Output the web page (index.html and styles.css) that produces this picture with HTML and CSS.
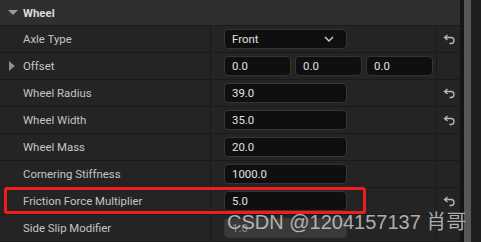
FILE: index.html
```html
<!DOCTYPE html>
<html lang="en">
<head>
    <meta charset="UTF-8">
    <title>Wheel</title>
    <link rel="stylesheet" href="styles.css">
</head>
<body>
    <div class="panel">
        <div class="details">
            <div class="category">
                <span class="tri-down"></span>
                <span class="category-name">Wheel</span>
            </div>

            <div class="row">
                <div class="name">Axle Type</div>
                <div class="value">
                    <div class="field combo">Front
                        <svg class="chevron" width="10" height="6" viewBox="0 0 10 6"><path d="M1 1 L5 5 L9 1" fill="none" stroke="#d0d0d0" stroke-width="1.4"/></svg>
                    </div>
                </div>
                <div class="reset"><svg width="12" height="11" viewBox="0 0 12 11"><path d="M4.5 1 L1.5 3.5 L4.5 6 M1.8 3.5 H8 A3 3 0 0 1 8 9.5 H6.5" fill="none" stroke="#b8b8b8" stroke-width="1.3"/></svg></div>
            </div>

            <div class="row">
                <div class="name"><span class="tri-right"></span>Offset</div>
                <div class="value triple">
                    <div class="field small">0.0</div>
                    <div class="field small">0.0</div>
                    <div class="field small">0.0</div>
                </div>
                <div class="reset"></div>
            </div>

            <div class="row">
                <div class="name">Wheel Radius</div>
                <div class="value"><div class="field">39.0</div></div>
                <div class="reset"><svg width="12" height="11" viewBox="0 0 12 11"><path d="M4.5 1 L1.5 3.5 L4.5 6 M1.8 3.5 H8 A3 3 0 0 1 8 9.5 H6.5" fill="none" stroke="#b8b8b8" stroke-width="1.3"/></svg></div>
            </div>

            <div class="row">
                <div class="name">Wheel Width</div>
                <div class="value"><div class="field">35.0</div></div>
                <div class="reset"><svg width="12" height="11" viewBox="0 0 12 11"><path d="M4.5 1 L1.5 3.5 L4.5 6 M1.8 3.5 H8 A3 3 0 0 1 8 9.5 H6.5" fill="none" stroke="#b8b8b8" stroke-width="1.3"/></svg></div>
            </div>

            <div class="row">
                <div class="name">Wheel Mass</div>
                <div class="value"><div class="field">20.0</div></div>
                <div class="reset"></div>
            </div>

            <div class="row">
                <div class="name">Cornering Stiffness</div>
                <div class="value"><div class="field">1000.0</div></div>
                <div class="reset"></div>
            </div>

            <div class="row">
                <div class="name">Friction Force Multiplier</div>
                <div class="value"><div class="field">5.0</div></div>
                <div class="reset"><svg width="12" height="11" viewBox="0 0 12 11"><path d="M4.5 1 L1.5 3.5 L4.5 6 M1.8 3.5 H8 A3 3 0 0 1 8 9.5 H6.5" fill="none" stroke="#b8b8b8" stroke-width="1.3"/></svg></div>
            </div>

            <div class="row">
                <div class="name">Side Slip Modifier</div>
                <div class="value"><div class="field hovered">1.0</div></div>
                <div class="reset"></div>
            </div>

            <!-- annotation drawn over the screenshot -->
            <div class="highlight"></div>
            <div class="watermark">CSDN @1204157137 肖哥</div>
        </div>
        <div class="scrollbar">
            <div class="thumb"></div>
        </div>
    </div>
</body>
</html>
```

FILE: styles.css
```css
body {
    margin: 0;
    padding: 0;
    background-color: #1a1a1a;
    font-family: Roboto, "Noto Sans", "Noto Sans CJK SC", sans-serif;
    font-size: 11.4px;
    color: #c4c4c4;
}

.panel {
    display: flex;
    width: 481px;
    height: 242px;
    overflow: hidden;
}

.details {
    position: relative;
    width: 461px;
    background-color: #242424;
}

.category {
    display: flex;
    align-items: center;
    height: 25px;
    border-bottom: 1px solid #1a1a1a;
    background-color: #2f2f2f;
    padding-left: 8px;
}

.tri-down {
    width: 0;
    height: 0;
    border-left: 5px solid transparent;
    border-right: 5px solid transparent;
    border-top: 5px solid #9a9a9a;
    margin-right: 5px;
}

.category-name {
    font-weight: bold;
    color: #dcdcdc;
}

.row {
    display: grid;
    grid-template-columns: 211px 226px 23px;
    height: 26px;
    border-bottom: 1px solid #1a1a1a;
}

.name {
    display: flex;
    align-items: center;
    padding-left: 23px;
    border-right: 1px solid #1a1a1a;
    position: relative;
}

.tri-right {
    position: absolute;
    left: 9px;
    top: 8px;
    width: 0;
    height: 0;
    border-top: 5px solid transparent;
    border-bottom: 5px solid transparent;
    border-left: 6px solid #8e8e8e;
}

.value {
    display: flex;
    align-items: center;
    padding-left: 13px;
    border-right: 1px solid #1a1a1a;
}

.triple {
    gap: 4px;
}

.field {
    box-sizing: border-box;
    display: flex;
    align-items: center;
    width: 123px;
    height: 20px;
    padding-left: 7px;
    background-color: #0f0f0f;
    border: 1px solid #353535;
    border-radius: 4px;
    color: #e2e2e2;
}

.field.small {
    width: 67px;
}

.field.hovered {
    background-color: #3a3a3a;
    color: #8a8a8a;
}

.combo {
    justify-content: space-between;
    padding-right: 12px;
}

.reset {
    display: flex;
    align-items: center;
    justify-content: center;
}

.scrollbar {
    width: 20px;
    background-color: #1f1f1f;
    border-left: 4px solid #161616;
}

.thumb {
    width: 7px;
    height: 242px;
    background-color: #575757;
}

.highlight {
    position: absolute;
    left: 4px;
    top: 187px;
    width: 356px;
    height: 21px;
    border: 3px solid #f21c1c;
    border-radius: 3px;
}

.watermark {
    position: absolute;
    left: 227px;
    top: 212px;
    font-family: "Liberation Sans", "Noto Sans CJK SC", sans-serif;
    font-size: 20px;
    line-height: 20px;
    color: rgba(220, 220, 220, 0.75);
    white-space: nowrap;
}
```
